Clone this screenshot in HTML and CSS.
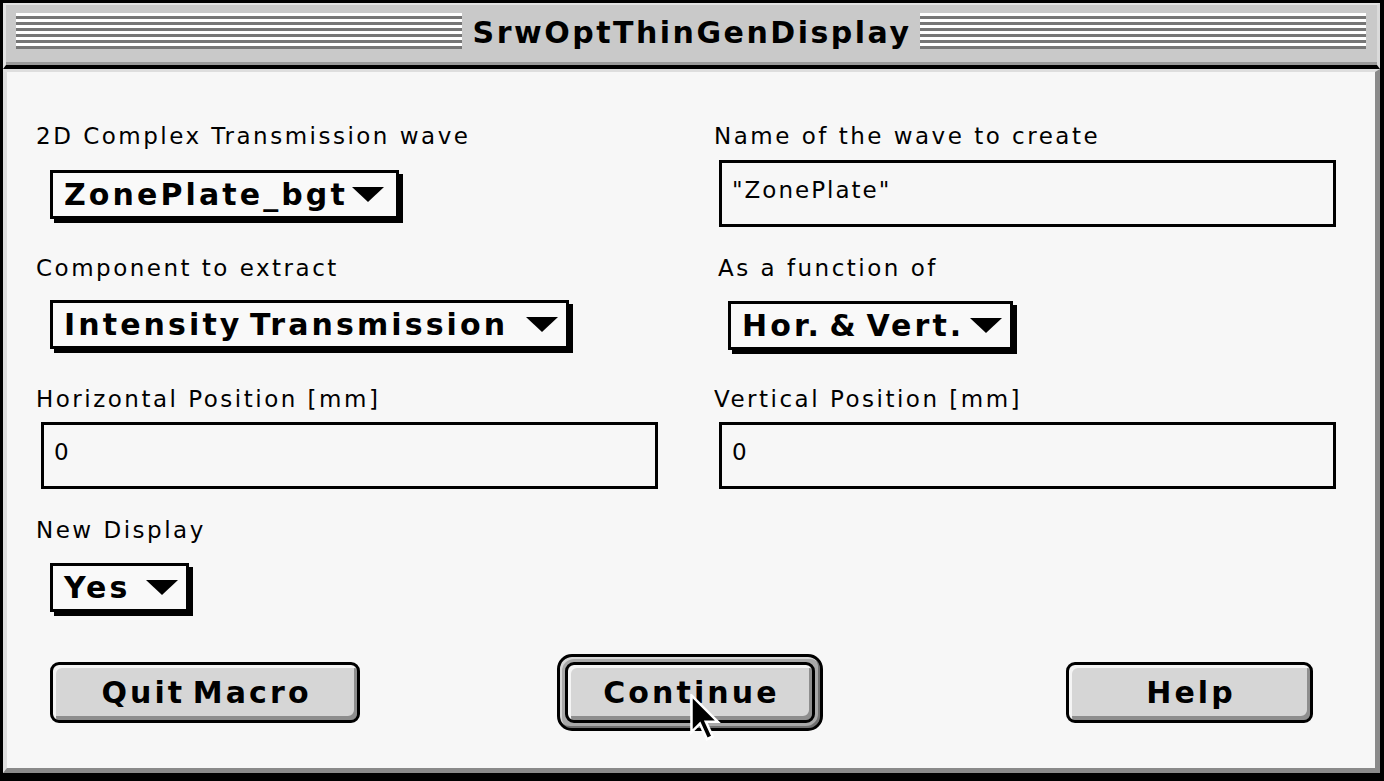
FILE: index.html
```html
<!DOCTYPE html>
<html>
<head>
<meta charset="utf-8">
<title>SrwOptThinGenDisplay</title>
<link rel="stylesheet" href="styles.css">
</head>
<body>
<div class="window">
  <div class="titlebar">
    <div class="stripes"></div>
    <div class="title">SrwOptThinGenDisplay</div>
    <div class="stripes"></div>
  </div>
  <div class="content">
    <div class="form">
      <div class="cell">
        <div class="label">2D Complex Transmission wave</div>
        <div class="popup popup-wave"><span class="popup-text">ZonePlate_bgt</span><span class="arrow"></span></div>
      </div>
      <div class="cell">
        <div class="label">Name of the wave to create</div>
        <div class="field field-top">"ZonePlate"</div>
      </div>
      <div class="cell">
        <div class="label">Component to extract</div>
        <div class="popup popup-comp"><span class="popup-text">Intensity Transmission</span><span class="arrow"></span></div>
      </div>
      <div class="cell">
        <div class="label label-shift">As a function of</div>
        <div class="popup popup-func"><span class="popup-text">Hor. &amp; Vert.</span><span class="arrow"></span></div>
      </div>
      <div class="cell">
        <div class="label">Horizontal Position [mm]</div>
        <div class="field field-mid">0</div>
      </div>
      <div class="cell">
        <div class="label">Vertical Position [mm]</div>
        <div class="field field-mid">0</div>
      </div>
      <div class="cell">
        <div class="label">New Display</div>
        <div class="popup popup-yes"><span class="popup-text">Yes</span><span class="arrow"></span></div>
      </div>
      <div class="cell"></div>
    </div>
    <div class="buttons">
      <button class="btn btn-quit">Quit Macro</button>
      <div class="ring"><button class="btn btn-continue">Continue</button></div>
      <button class="btn btn-help">Help</button>
    </div>
  </div>
  <svg class="cursor" width="34" height="48" viewBox="0 0 12 17">
    <path d="M0.5 0.5 L0.5 13.5 L3.5 10.5 L6 16 L8 15 L5.6 9.8 L9.8 9.8 Z" fill="#000" stroke="#fff" stroke-width="0.9" stroke-linejoin="miter"/>
  </svg>
</div>
</body>
</html>
```
FILE: styles.css
```css
html, body {
  margin: 0;
  padding: 0;
  background: #000;
}

.window {
  position: relative;
  width: 1384px;
  height: 781px;
  box-sizing: border-box;
  background: #000;
  padding: 3px 4px 8px 3px;
  display: flex;
  flex-direction: column;
}

.titlebar {
  flex: none;
  height: 66px;
  box-sizing: border-box;
  background: #c9c9c9;
  border-top: 2px solid #e2e2e2;
  border-left: 3px solid #e2e2e2;
  border-right: 3px solid #dadada;
  border-bottom: 4px solid #000;
  box-shadow: inset 0 -3px 0 #9a9a9a;
  display: flex;
  align-items: flex-start;
  padding: 0 11px 0 10px;
}

.stripes {
  flex: 1;
  height: 36px;
  margin-top: 8px;
  background: repeating-linear-gradient(to bottom, #ffffff 0 3px, #767676 3px 6px);
}

.title {
  padding: 0 9px 0 11px;
  font-family: "DejaVu Sans", sans-serif;
  font-weight: bold;
  font-size: 30px;
  letter-spacing: 2.5px;
  line-height: 56px;
  color: #000;
  white-space: nowrap;
}

.content {
  flex: 1;
  background: #f7f7f7;
  border-style: solid;
  border-width: 3px 5px 5px 4px;
  border-color: #dedede #8a8a8a #8a8a8a #dedede;
  padding: 50px 0 0 29px;
}

.form {
  display: grid;
  grid-template-columns: 678px 1fr;
  grid-template-rows: 132px 131px 131px 131px;
}

.cell {
  display: flex;
  flex-direction: column;
  align-items: flex-start;
}

.label {
  font-family: "DejaVu Sans", sans-serif;
  font-size: 23px;
  letter-spacing: 2.5px;
  line-height: 28px;
  color: #000;
  white-space: nowrap;
}

.label-shift {
  margin-left: 4px;
}

.popup {
  box-sizing: border-box;
  height: 49px;
  border: 3px solid #000;
  background: #f9f9f9;
  box-shadow: 4px 4px 0 #000;
  display: flex;
  align-items: center;
  justify-content: space-between;
  padding: 0 8px 0 11px;
  margin-left: 14px;
  margin-top: 19px;
}

.popup-text {
  font-family: "DejaVu Sans", sans-serif;
  font-weight: bold;
  font-size: 30px;
  letter-spacing: 3.1px;
  word-spacing: -6px;
  line-height: 40px;
  white-space: nowrap;
  color: #000;
}

.arrow {
  width: 0;
  height: 0;
  border-left: 16px solid transparent;
  border-right: 16px solid transparent;
  border-top: 15px solid #000;
}

.popup-wave { width: 349px; margin-top: 20px; }
.popup-wave .arrow { margin-right: 4px; }
.popup-comp { width: 519px; margin-top: 18px; }
.popup-func { width: 285px; }
.popup-yes { width: 139px; }

.field {
  box-sizing: border-box;
  width: 617px;
  height: 67px;
  border: 3px solid #000;
  background: #f7f7f7;
  margin-left: 5px;
  padding: 13px 0 0 10px;
  font-family: "DejaVu Sans", sans-serif;
  font-size: 23px;
  letter-spacing: 2px;
  line-height: 28px;
  color: #000;
}

.field-top { margin-top: 10px; }
.field-mid { margin-top: 9px; }

.buttons {
  display: flex;
  align-items: center;
  margin-top: 7px;
  padding-left: 14px;
}

.btn {
  box-sizing: border-box;
  height: 61px;
  margin: 0;
  padding: 0 0 0 3px;
  border: 3px solid #000;
  border-radius: 9px;
  background: #d6d6d6;
  box-shadow: inset 3px 3px 0 #f4f4f4, inset -3px -4px 0 #8e8e8e;
  font-family: "DejaVu Sans", sans-serif;
  font-weight: bold;
  font-size: 30px;
  letter-spacing: 3.1px;
  word-spacing: -6px;
  color: #000;
  display: flex;
  align-items: center;
  justify-content: center;
}

.btn-quit { width: 310px; }
.btn-continue { width: 250px; }
.btn-help { width: 247px; margin-left: 243px; }

.ring {
  margin-left: 197px;
  border: 3px solid #000;
  border-radius: 15px;
  padding: 5px;
  background: #a8a8a8;
  box-shadow: inset 2px 2px 0 #d6d6d6, inset -2px -2px 0 #707070;
}

.cursor {
  position: absolute;
  left: 690px;
  top: 694px;
}
```
